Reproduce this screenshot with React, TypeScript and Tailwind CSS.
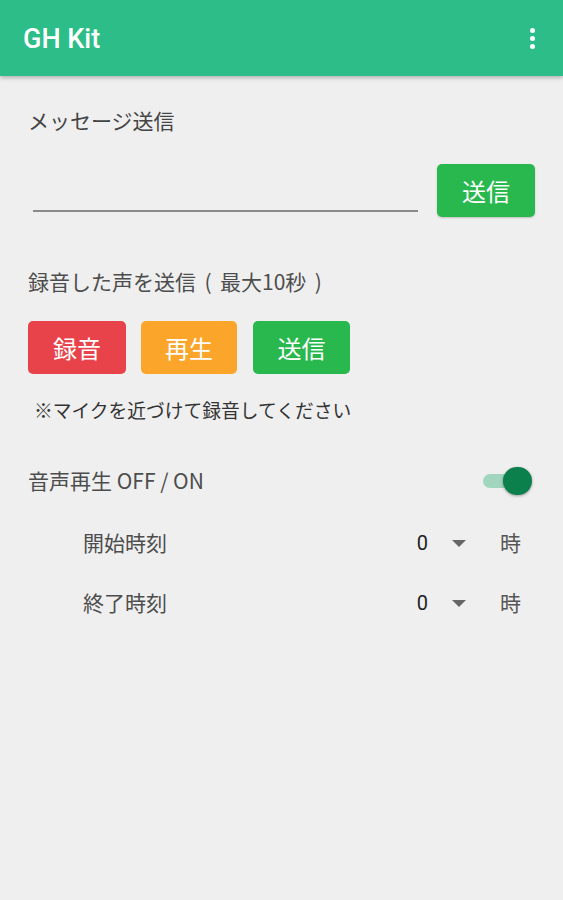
import React, { useState } from "react";

const jp = { fontFamily: '"Noto Sans CJK JP", Roboto, sans-serif' };
const rb = { fontFamily: 'Roboto, "Noto Sans CJK JP", sans-serif' };

const TimeRow = ({ label }: { label: string }) => (
  <div className="flex items-center h-[60px] pl-[55px] pr-[14px]">
    <span className="text-[21px] text-[#4d4d4d] flex-1" style={jp}>
      {label}
    </span>
    <span className="text-[20px] text-[#222]" style={rb}>
      0
    </span>
    <span className="ml-[24px] w-0 h-0 border-l-[7px] border-r-[7px] border-t-[7px] border-l-transparent border-r-transparent border-t-[#666]" />
    <span className="ml-[34px] text-[21px] text-[#555]" style={jp}>
      時
    </span>
  </div>
);

const App = () => {
  const [message, setMessage] = useState("");
  const [voiceOn, setVoiceOn] = useState(true);

  return (
    <div className="w-full h-[900px] bg-[#efefef]">
      <div className="h-[76px] bg-[#2dbd88] flex items-center justify-between pl-[23px] pr-[28px] shadow-[0_2px_4px_rgba(0,0,0,0.25)] relative">
        <h1 className="text-white text-[27px] leading-none font-medium mt-[2px]" style={rb}>
          GH Kit
        </h1>
        <div className="flex flex-col gap-[3px] items-center">
          <span className="w-[5px] h-[5px] rounded-full bg-white" />
          <span className="w-[5px] h-[5px] rounded-full bg-white" />
          <span className="w-[5px] h-[5px] rounded-full bg-white" />
        </div>
      </div>

      <div className="px-[28px]">
        <p className="mt-[29px] text-[21px] leading-[30px] text-[#444]" style={jp}>
          メッセージ送信
        </p>

        <div className="flex items-end mt-[29px]">
          <input
            className="ml-[5px] w-[385px] h-[36px] mb-[5px] bg-transparent border-b-2 border-[#8a8a8a] outline-none text-[18px]"
            value={message}
            onChange={(e) => setMessage(e.target.value)}
          />
          <button
            className="ml-auto w-[98px] h-[53px] rounded-[5px] bg-[#28b84d] text-white text-[24px] shadow-[0_1px_2px_rgba(0,0,0,0.2)]"
            style={jp}
          >
            送信
          </button>
        </div>

        <p className="mt-[49px] text-[21px] leading-[30px] text-[#4d4d4d]" style={jp}>
          録音した声を送信
          <span className="inline-block w-[24px] text-center">(</span>
          最大10秒
          <span className="inline-block w-[24px] text-center">)</span>
        </p>

        <div className="flex mt-[25px]">
          <button className="w-[98px] h-[53px] rounded-[5px] bg-[#e8434b] text-white text-[24px]" style={jp}>
            録音
          </button>
          <button className="ml-[15px] w-[96px] h-[53px] rounded-[5px] bg-[#fba52b] text-white text-[24px]" style={jp}>
            再生
          </button>
          <button className="ml-[16px] w-[97px] h-[53px] rounded-[5px] bg-[#28b84d] text-white text-[24px]" style={jp}>
            送信
          </button>
        </div>

        <p className="mt-[23px] ml-[6px] text-[18.75px] leading-[26px] text-[#333]" style={jp}>
          ※マイクを近づけて録音してください
        </p>

        <div className="flex items-center justify-between mt-[38px] h-[40px]">
          <span className="text-[21px] text-[#4d4d4d]" style={jp}>
            音声再生 OFF / ON
          </span>
          <button
            className="relative w-[49px] h-[30px] mr-[3px]"
            onClick={() => setVoiceOn((prev) => !prev)}
          >
            <span className="absolute left-0 right-[20px] top-[8px] h-[14px] rounded-l-full bg-[#9fd6bd]" />
            <span
              className={`absolute top-[1px] w-[29px] h-[28px] rounded-full shadow-[0_1px_3px_rgba(0,0,0,0.35)] ${
                voiceOn ? "right-0 bg-[#0b7f4c]" : "left-0 bg-white"
              }`}
            />
          </button>
        </div>

        <div className="mt-[12px]">
          <TimeRow label="開始時刻" />
          <TimeRow label="終了時刻" />
        </div>
      </div>
    </div>
  );
};

export default App;
